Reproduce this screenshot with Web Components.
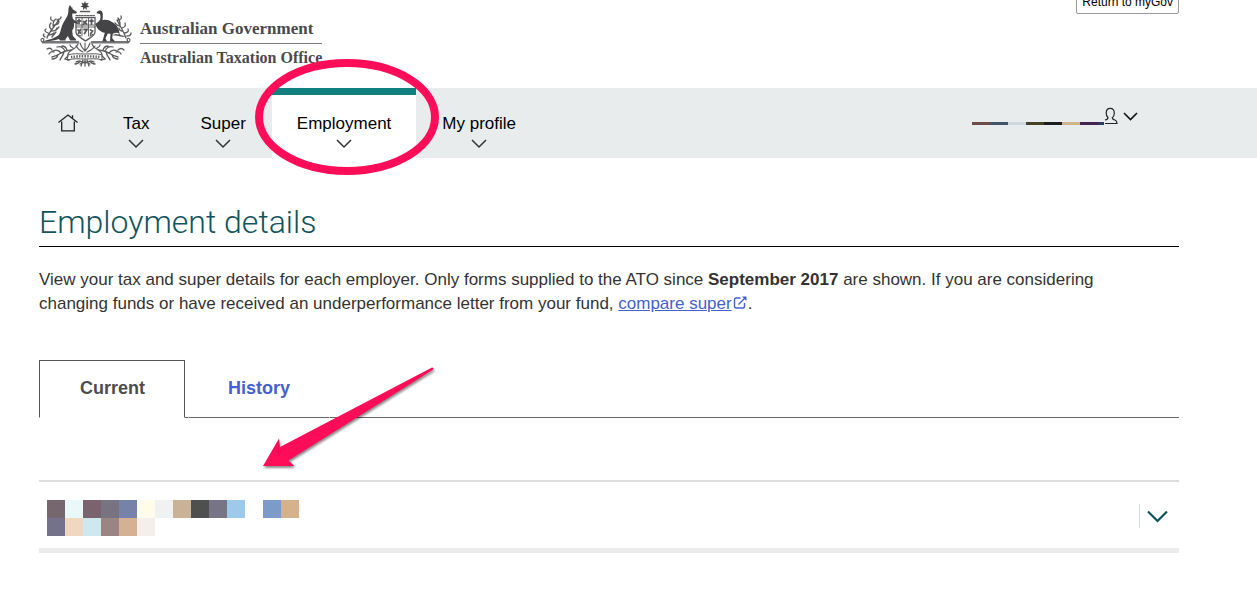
<!DOCTYPE html>
<html lang="en-AU">
<head>
<meta charset="utf-8">
<title>Employment details</title>
<style>
  body {
    margin: 0;
    position: relative;
    background: #fff;
    color: #333;
    font: 17px/24px "Liberation Sans", Arial, sans-serif;
    --page-pad: 0 78px 0 39px;
  }
</style>
</head>
<body>
<ato-header></ato-header>
<ato-nav>
  <nav-item>Tax</nav-item>
  <nav-item>Super</nav-item>
  <nav-item current>Employment</nav-item>
  <nav-item>My profile</nav-item>
</ato-nav>
<ato-page>
  <span slot="title">Employment details</span>
  View your tax and super details for each employer. Only forms supplied to the ATO since <b>September 2017</b> are shown. If you are considering changing funds or have received an underperformance letter from your fund, <ext-link href="#compare">compare super</ext-link>.
  <tab-bar slot="body"></tab-bar>
  <employer-row slot="body">
    <pixel-row colors="#76676f #ebf8fa #79646e #777380 #7782a8 #fffcec #f0f2f2 #cab299 #4e5050 #777485 #9dcaea #fff #7c9bc8 #d5b28b"></pixel-row>
    <pixel-row colors="#74718a #f0d8c0 #cde8ef #9a8583 #d4b094 #f5efec"></pixel-row>
  </employer-row>
</ato-page>
<mark-up></mark-up>

<script>
// small helper, every element here is just css + markup
function attach(el, css, html) {
  el.attachShadow({mode: 'open'}).innerHTML = `<style>* { box-sizing: border-box; } ${css}</style>${html}`
}

// ---------- coat of arms ----------
class AtoCrest extends HTMLElement {
  constructor() {
    super()
    attach(this, `
      :host { display: block; }
      svg { display: block; }
    `, `
    <svg width="94" height="70" viewBox="9 0 94 70" fill="none" stroke="#5a5a5c" stroke-linecap="round" role="img" aria-label="Commonwealth coat of arms">
      <!-- star -->
      <path fill="#444446" stroke="none" d="M55 1l1 2.6 2.7-.8-1.5 2.4 2.2 1.7-2.8.4.2 2.8-1.8-2-2 2 .2-2.8-2.8-.5 2.3-1.6-1.4-2.4 2.7.8z"/>
      <path d="M50.500 11.500h9" stroke-width="1.400" stroke-dasharray="1.200 .8"/>
      <!-- wattle, upper -->
      <g stroke-width="1.300">
        <path d="M17 38c2-7 9-12 12-19M18 33c-3-1-4-3-2-4M21 29c-2-2-2-4 0-6M23 26c0-4 1-6 3-7M24 25c3 0 5-1 5-4M21 31c3 0 5 0 6-3M18 35c3 0 4 0 6-2M23 21c-2-1-3-2-2-4M27 20c3-1 4-1 4-3M15 37c-2-1-2-2-1-3M26 32l-4 5M29 27l-3 3"/>
        <path d="M96 38c-2-6-6-12-9-18M94 33c4 0 5-2 4-4M92 28c3-1 4-2 3-5M90 25c0-3 0-5-2-7M90 26c-3 0-4-2-5-3M93 31c-3 0-4-1-4-3M95 36c-3 1-5 0-6-2M88 20c3 0 4-2 3-4M97 36c2 0 4-1 4-3M84 35c3-1 5 1 8 1"/>
      </g>
      <!-- supports -->
      <path d="M13 42.300h35M62 42.300h36" stroke="#77777a" stroke-width="2.600"/>
      <path d="M14 42c-3 .5-4-2.500-2-3.500 1.500-.5 2.500 1 1.500 2M97 42c3 .5 4-2.500 2-3.500-1.500-.5-2.500 1-1.500 2" stroke-width="1.100"/>
      <!-- shield -->
      <path fill="#fff" stroke-width="1.300" d="M46 17.500h19v14.500c0 4-5 5.500-9.500 9C51 37.500 46 36 46 32z"/>
      <path d="M52 18v18M58.500 18v18M46 27h19" stroke-width=".9"/>
      <path d="M47.500 21h3M49 19.500v4M53.500 21.500l3 2.500M56.500 20.500l-3 4M60 21h3M61.500 19.500v4.500M48 30l2.500 3M50.500 29.500l-2 4M54 29.500h3l-2.500 4M60.500 30l2 1-2 3" stroke-width="1.800"/>
      <path d="M47 25h17M47 35l4 1M60 36l3-1.500" stroke-width="1.200" stroke-dasharray="1.500 1"/>
      <path d="M46 15.500h19" stroke-width="1.200" stroke-dasharray="1.600 1.200"/>
      <!-- kangaroo -->
      <path fill="#444446" stroke="none" d="M40 5l1.300 2.600.9-.4.400 2 4 2.600c.7.800.1 1.600-.9 1.700l-3.300.1c-.4 2.400 0 4.200 1 6l4.800 3.200-.3 1.300-3.900-1.200c.4 3-.4 5.700-1.800 7.600l.7 5.500 3.200 3.400v1.200h-6l-2.200-4.600-2.400 3.300v1.300h-5.500l-1.200-1.500c-4.500 1.700-9.300 2.300-15.300 2 6-1.600 13-3.200 15.800-6.800 1.800-3.800 2-8.500 4.500-12.400 2.400-3.600 4.400-6.600 4.600-10.400.1-2.800-.2-4 1.600-6.500z"/>
      <!-- emu -->
      <path fill="#444446" stroke="none" d="M66.500 13.200c.7-2.800 4.300-3.700 5.700-1.500 1.200 2.500.3 5.700.4 8.500 3-.8 6.400-.2 9.400 1.700 4.800 2.700 7 6 7.500 11.500-2.600-1.200-4.300-.6-6.700.3l-.6 4.500 3 3.300h-5.200l.5-7.700-2.700-.3-2.300 4.700 1.500 3.300h-4.700l1-3.300 1.500-5.400c-4.400-.6-8.600-4.600-9.400-8.800 1.500-1.500 4-2.500 4.800-4.800.5-2 .3-3.700-.2-5.200z"/>
      <!-- wattle, lower -->
      <g stroke-width="1.300">
        <path d="M48 44c-2 5-6 6-12 7-5 1-8 5-14 6M35 51c-2-4-5-5-8-4M31 53c-3-4-6-3-8-2M37 50c-1-3-3-4-5-4M28 55c-1 3-3 4-6 4M34 52c-1 4-3 5-4 8M24 52c-3-1-4 0-5 2M43 48c-2-1-3-2-3-3M22 50c-1-2-3-2-5-1M42 50c-2 1-4 3-4 5"/>
        <path d="M62 44c2 5 6 6 12 7 5 1 8 5 14 6M75 51c2-4 5-5 8-4M79 53c3-4 6-3 8-2M73 50c1-3 3-4 5-4M82 55c1 3 3 4 6 4M76 52c1 4 3 5 4 8M86 52c3-1 4 0 5 2M67 48c2-1 3-2 3-3M88 50c2-2 4-2 6 0M68 50c2 1 4 3 4 5"/>
        <path d="M50 43c1 4 3 6 5 8 2-2 4-4 5-8M46 46c2 3 4 5 7 6M65 46c-2 3-5 5-8 6M55 43v8" stroke-width="1.100"/>
      </g>
      <!-- scroll -->
      <path fill="#fff" stroke-width="1" d="M38 55c5-2 10-1 17-1s12-1 17 1v5c-5-2-11-1-17-1s-12-1-17 1z"/>
      <path d="M41 57c8-1 20-1 29 0" stroke-width="2.400" stroke-linecap="butt" stroke-dasharray="1.400 1.300"/>
      <path d="M38 56l-3 3 4 1M72 56l3 3-4 1" stroke-width="1.300"/>
      <path d="M46 62c3-2 6 0 9 1 3-1 6-3 9-1M50 61c-1 2-3 3-5 3M60 61c1 2 3 3 5 3M53 60l-2 6M57 60l2 6M55 60v6M50 64l4-2M60 64l-4-2" stroke-width="1.300"/>
    </svg>`)
  }
}
customElements.define('ato-crest', AtoCrest)

// ---------- header ----------
class AtoHeader extends HTMLElement {
  constructor() {
    super()
    attach(this, `
      :host { display: block; padding: var(--page-pad); }
      header { display: flex; justify-content: space-between; align-items: flex-start; min-height: 88px; }
      .logo { display: flex; gap: 7px; color: #4a4a4c; font-family: "Liberation Serif", "Times New Roman", serif; font-weight: bold; }
      .words { padding-top: 15px; white-space: nowrap; }
      .gov { display: block; font-size: 17px; line-height: 28px; border-bottom: 1px solid #7c7c7c; }
      .office { display: block; font-size: 16px; line-height: 28px; }
      button {
        margin-top: -10px; height: 24px; padding: 0 5px;
        border: 1px solid #999; border-radius: 2px; background: #fff; color: #000;
        font: 12px/20px "Liberation Sans", Arial, sans-serif;
      }
    `, `
      <header>
        <div class="logo">
          <ato-crest></ato-crest>
          <div class="words">
            <span class="gov">Australian Government</span>
            <span class="office">Australian Taxation Office</span>
          </div>
        </div>
        <button type="button">Return to myGov</button>
      </header>`)
  }
}
customElements.define('ato-header', AtoHeader)

// ---------- nav ----------
class NavItem extends HTMLElement {
  constructor() {
    super()
    attach(this, `
      :host { display: flex; }
      a {
        display: flex; flex-direction: column; align-items: center;
        padding: 17px 25px 0; border-top: 7px solid transparent;
        color: #000; text-decoration: none; white-space: nowrap;
      }
      :host([current]) a { background: #fff; border-top-color: #108080; }
      svg { margin-top: 3px; }
    `, `
      <a href="#"><slot></slot>
        <svg width="16" height="10" viewBox="0 0 16 10" fill="none" stroke="#333" stroke-width="1.500"><path d="M1 1l7 7 7-7"/></svg>
      </a>`)
  }
}
customElements.define('nav-item', NavItem)

// one line of coloured squares, --thick sets the block height
class PixelRow extends HTMLElement {
  constructor() {
    super()
    const blocks = this.getAttribute('colors').split(' ').map(c => `<i style="background:${c}"></i>`).join('')
    attach(this, `
      :host { display: flex; overflow: hidden; }
      i { flex: none; width: 18px; height: var(--thick, 18px); }
    `, blocks)
  }
}
customElements.define('pixel-row', PixelRow)

class AtoNav extends HTMLElement {
  constructor() {
    super()
    attach(this, `
      :host { display: block; background: #e8eced; padding: var(--page-pad); }
      nav { display: flex; gap: 1px; height: 70px; }
      .home { display: flex; width: 58px; align-items: center; justify-content: center; }
      .user {
        display: flex; align-items: flex-end; align-self: flex-start;
        margin: 19px 41px 0 auto; padding: 0; border: 0; background: none;
      }
      pixel-row { --thick: 3px; width: 132px; }
      .down { margin: 0 0 3px 5px; }
    `, `
      <nav aria-label="Main">
        <a class="home" href="#" aria-label="Home">
          <svg width="20" height="18" viewBox="0 0 20 18" fill="none" stroke="#222" stroke-width="1.300"><path d="M.5 8.500L10 1l9.500 7.500M3.700 7.500v9.300h12.600V7.500M14.500 4V1.200"/></svg>
        </a>
        <slot></slot>
        <button class="user" type="button" aria-label="Account">
          <pixel-row colors="#6b4c46 #43536a #cdd9de #454126 #1c1d1e #cdb48f #42234f #2b3b62"></pixel-row>
          <svg width="14" height="18" viewBox="0 0 14 18" fill="none" stroke="#222" stroke-width="1.200"><path d="M1 16.500h12c0-2-.5-3-2-3.500-2-.5-2.700-1-2.700-2.300 1.600-1 2-2.500 2-4.700 0-3-1.500-4.700-4-4.700S2.200 3 2.200 6c0 2.200.5 3.500 1.800 4.700 0 1.300-.4 1.700-3 2.300"/></svg>
          <svg class="down" width="15" height="10" viewBox="0 0 15 10" fill="none" stroke="#111" stroke-width="1.600"><path d="M1 1l6.500 6.500L14 1"/></svg>
        </button>
      </nav>`)
  }
}
customElements.define('ato-nav', AtoNav)

// ---------- page body ----------
class ExtLink extends HTMLElement {
  constructor() {
    super()
    attach(this, `
      :host { display: inline; }
      a { color: #4561cf; text-decoration: underline; white-space: nowrap; }
    `, `<a href="${this.getAttribute('href')}"><slot></slot><svg width="16" height="13" viewBox="0 0 16 13" fill="none" stroke="#4561cf" stroke-width="1.400"><path d="M8.500 2H4.300Q2.500 2 2.500 3.800v6.400Q2.500 12 4.300 12h6.400q1.800 0 1.800-1.800V7M6.500 8.500L13 2"/><path d="M10 .5h4.500V5z" fill="#4561cf" stroke="none"/></svg></a>`)
  }
}
customElements.define('ext-link', ExtLink)

class AtoPage extends HTMLElement {
  constructor() {
    super()
    attach(this, `
      :host { display: block; padding: var(--page-pad); }
      h1 {
        margin: 44px 0 21px; padding-bottom: 4px; border-bottom: 1px solid #000;
        color: #11545b; font: 300 32px/40px Roboto, "Liberation Sans", sans-serif;
      }
      p { margin: 0 0 44px; padding-right: 60px; }
    `, `
      <main>
        <h1><slot name="title"></slot></h1>
        <p><slot></slot></p>
        <slot name="body"></slot>
      </main>`)
  }
}
customElements.define('ato-page', AtoPage)

class TabBar extends HTMLElement {
  constructor() {
    super()
    attach(this, `
      :host { display: block; }
      div { display: flex; height: 58px; }
      button {
        padding: 0 39px 2px; border: 1px solid transparent; border-bottom-color: #666; background: #fff;
        color: #4561d0; font: bold 18px/24px "Liberation Sans", Arial, sans-serif;
      }
      .on { padding-left: 40px; border-color: #555 #555 #fff; color: #4d4d4d; }
      .gap, .fill { border-bottom: 1px solid #666; }
      .gap { width: 3px; }
      .fill { flex: 1; }
    `, `
      <div role="tablist">
        <button class="on" type="button" role="tab" aria-selected="true">Current</button>
        <span class="gap"></span>
        <button type="button" role="tab" aria-selected="false">History</button>
        <span class="fill"></span>
      </div>`)
  }
}
customElements.define('tab-bar', TabBar)

class EmployerRow extends HTMLElement {
  constructor() {
    super()
    attach(this, `
      :host { display: block; margin-top: 62px; border-top: 2px solid #dcdcdc; border-bottom: 5px solid #ebebeb; }
      .row { display: flex; justify-content: space-between; align-items: center; padding: 18px 8px 12px; }
      button { height: 24px; margin-top: -4px; padding: 0 3px 0 7px; border: 0; border-left: 1px solid #d3dcd9; background: #fff; }
      svg { display: block; }
    `, `
      <div class="row">
        <div><slot></slot></div>
        <button type="button" aria-label="Show employer">
          <svg width="21" height="13" viewBox="0 0 21 13" fill="none" stroke="#0f555c" stroke-width="2.200"><path d="M1 1.500l9.500 9.500L20 1.500"/></svg>
        </button>
      </div>`)
  }
}
customElements.define('employer-row', EmployerRow)

// pink ring and arrow, they float over the page
class MarkUp extends HTMLElement {
  constructor() {
    super()
    attach(this, `
      :host { position: absolute; top: 0; left: 0; pointer-events: none; }
      svg { display: block; }
      .arrow { filter: drop-shadow(1px 2px 1px rgba(0, 0, 0, .45)); }
    `, `
      <svg width="450" height="480" viewBox="0 0 450 480" aria-hidden="true">
        <ellipse cx="347" cy="117" rx="88" ry="54" fill="none" stroke="#ff0d59" stroke-width="8"/>
        <path class="arrow" fill="#ff0d59" d="M432 367.500q2 0 1.300 2L288.500 460.500l6 5.500H263l16-27.500 1 8.500z"/>
      </svg>`)
  }
}
customElements.define('mark-up', MarkUp)
</script>
</body>
</html>
